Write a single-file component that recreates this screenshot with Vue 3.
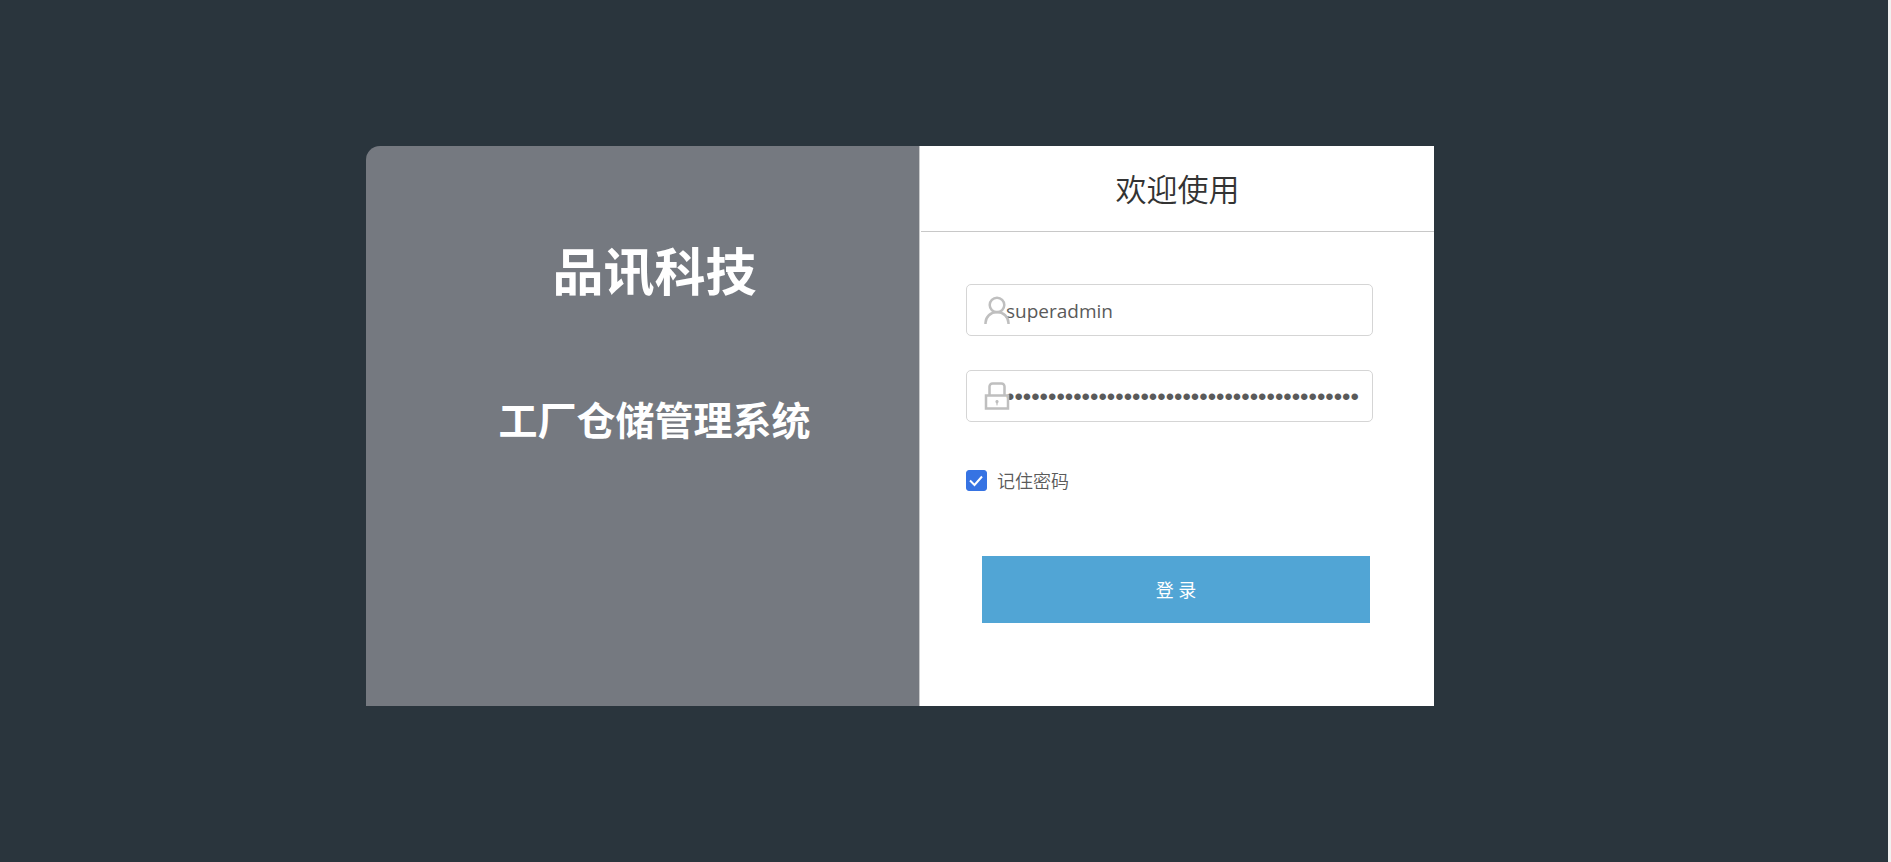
<script setup>
import { ref } from 'vue'

const username = ref('superadmin')
const password = ref('x'.repeat(42))
const remember = ref(true)
</script>

<template>
  <div class="page">
    <main class="card">
      <section class="brand">
        <h1>品讯科技</h1>
        <h2>工厂仓储管理系统</h2>
      </section>
      <section class="panel">
        <h3>欢迎使用</h3>
        <form class="form" @submit.prevent>
          <div class="field">
            <svg class="icon" viewBox="0 0 26 28" aria-hidden="true">
              <circle cx="13" cy="9" r="7.3" />
              <path d="M1.500 28v-1a11.500 11 0 0 1 23 0v1" />
            </svg>
            <input v-model="username" type="text" aria-label="用户名" autocomplete="off" />
          </div>
          <div class="field">
            <svg class="icon" viewBox="0 0 26 28" aria-hidden="true">
              <path d="M5.500 13V4.500a3 3 0 0 1 3-3h9a3 3 0 0 1 3 3V13" />
              <path d="M2 13.500h22v13H2z" />
              <path class="key" d="M13 18a1.600 1.600 0 0 1 .8 3l-.4 2.500h-.8l-.4-2.500a1.600 1.600 0 0 1 .8-3z" />
            </svg>
            <input v-model="password" type="password" aria-label="密码" autocomplete="off" />
          </div>
          <label class="remember">
            <span class="box">
              <input v-model="remember" type="checkbox" />
              <svg v-if="remember" viewBox="0 0 21 21" aria-hidden="true">
                <path d="M4 10.500l4.500 4.500L16 6.500" />
              </svg>
            </span>
            记住密码
          </label>
          <button type="submit">登 录</button>
        </form>
      </section>
    </main>
  </div>
</template>

<style>
body {
  margin: 0;
}
</style>

<style scoped>
.page {
  box-sizing: border-box;
  min-height: 100vh;
  display: grid;
  grid-template-columns: 366fr 1068fr 454fr;
  align-items: start;
  padding: 146px 0;
  border-right: 3px solid #f1f1f1;
  background: #2a353d;
  font-family: "Open Sans", "Noto Sans CJK SC", sans-serif;
}

.card {
  grid-column: 2;
  display: grid;
  grid-template-columns: 553fr 515fr;
  min-height: 560px;
}

.brand {
  padding-left: 24px;
  border-radius: 14px 0 0 0;
  background: #757980;
  color: #fff;
  text-align: center;
}

h1,
h2,
h3 {
  margin: 0;
}

h1 {
  margin-top: 87px;
  font-size: 51px;
  line-height: 76px;
}

h2 {
  margin-top: 83px;
  font-size: 39px;
  line-height: 56px;
}

.panel {
  padding-left: 1px;
  border-left: 1px solid #c9cacc;
  background: #fff;
}

h3 {
  padding-bottom: 2px;
  border-bottom: 1px solid #c8c8c8;
  color: #333;
  font-family: "Noto Sans CJK SC", sans-serif;
  font-size: 31px;
  font-weight: 350;
  line-height: 83px;
  text-align: center;
}

.form {
  display: flex;
  flex-direction: column;
  padding: 52px 61px 0 45px;
}

.field {
  position: relative;
  margin-bottom: 34px;
}

.field input {
  box-sizing: border-box;
  display: block;
  width: 100%;
  height: 52px;
  padding: 2px 10px 0 39px;
  border: 1px solid #d5d5d5;
  border-radius: 5px;
  outline: 0;
  background: transparent;
  color: #5a5a5a;
  font: 19px "Open Sans", "Noto Sans CJK SC", sans-serif;
}

.field input[type="password"] {
  font: 24px "Liberation Sans", sans-serif;
}

.icon {
  position: absolute;
  top: 12px;
  left: 18px;
  width: 26px;
  height: 28px;
  fill: none;
  stroke: #bfbfbf;
  stroke-width: 2.5;
}

.icon .key {
  fill: #bfbfbf;
  stroke: none;
}

.remember {
  display: flex;
  align-items: center;
  align-self: flex-start;
  gap: 10px;
  margin-top: 11px;
  color: #5a5a5a;
  font-family: "Noto Sans CJK SC", sans-serif;
  font-size: 18px;
  font-weight: 350;
  line-height: 26px;
}

.box {
  display: grid;
}

.box > * {
  grid-area: 1 / 1;
  width: 21px;
  height: 21px;
}

.box input {
  appearance: none;
  margin: 0;
  border: 1px solid #3673e3;
  border-radius: 3px;
}

.box input:checked {
  background: #3673e3;
}

.box svg {
  fill: none;
  stroke: #fff;
  stroke-width: 2;
  pointer-events: none;
}

button {
  height: 67px;
  margin: 63px 3px 0 16px;
  padding: 0 0 2px;
  border: 0;
  background: #51a5d5;
  color: #fff;
  font: 18px "Open Sans", "Noto Sans CJK SC", sans-serif;
  cursor: pointer;
}
</style>
